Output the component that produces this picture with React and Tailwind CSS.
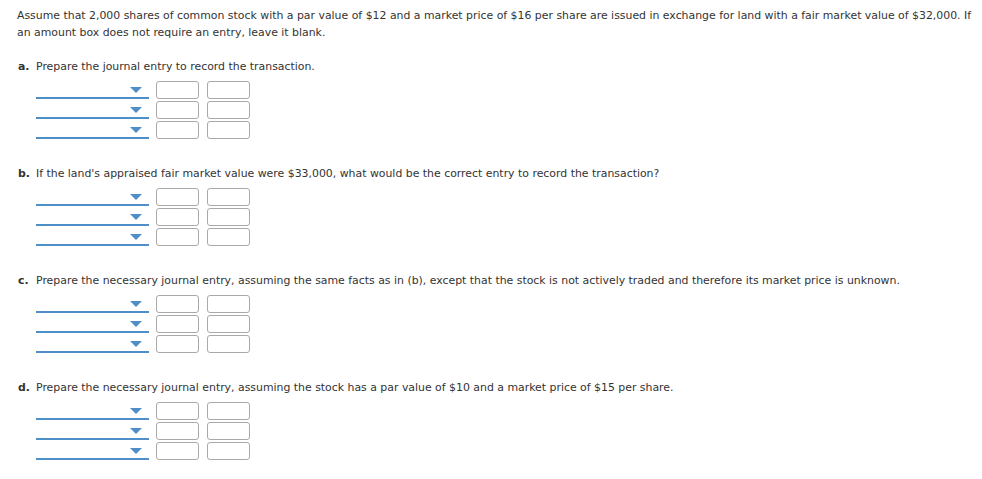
import React from "react";

const parts = [
    { key: "a", text: "Prepare the journal entry to record the transaction." },
    { key: "b", text: "If the land's appraised fair market value were $33,000, what would be the correct entry to record the transaction?" },
    { key: "c", text: "Prepare the necessary journal entry, assuming the same facts as in (b), except that the stock is not actively traded and therefore its market price is unknown." },
    { key: "d", text: "Prepare the necessary journal entry, assuming the stock has a par value of $10 and a market price of $15 per share." },
];

const EntryRow = () => (
    <div className="flex items-start h-[20px]">
        <div className="relative w-[113px] h-[18px] border-b-2 border-[#4f8fc8]">
            <span className="absolute right-[7px] top-[6px] w-0 h-0 border-l-[6px] border-r-[6px] border-t-[6px] border-l-transparent border-r-transparent border-t-[#4f8fc8]" />
        </div>
        <div className="ml-[7px] w-[43px] h-[18px] border border-[#a9a9a9] rounded-[3px] bg-white" />
        <div className="ml-[8px] w-[43px] h-[18px] border border-[#a9a9a9] rounded-[3px] bg-white" />
    </div>
);

export default function App() {
    return (
        <div className="w-[982px] h-[479px] bg-white text-[#333] text-[10.9px] leading-[17px] font-['DejaVu_Sans',sans-serif] pl-[17px] pt-[7px]">
            <p className="pr-[6px]">
                Assume that 2,000 shares of common stock with a par value of $12 and a market price of $16 per share are issued in exchange for land with a fair market value of $32,000. If an amount box does not require an entry, leave it blank.
            </p>
            <div className="mt-[17px]">
                {parts.map((p) => (
                    <div key={p.key} className="h-[107px]">
                        <p className="flex pl-[1px]">
                            <b className="w-[18px] shrink-0">{p.key}.</b>
                            <span>{p.text}</span>
                        </p>
                        <div className="ml-[19px] mt-[6px]">
                            <EntryRow />
                            <EntryRow />
                            <EntryRow />
                        </div>
                    </div>
                ))}
            </div>
        </div>
    );
}
